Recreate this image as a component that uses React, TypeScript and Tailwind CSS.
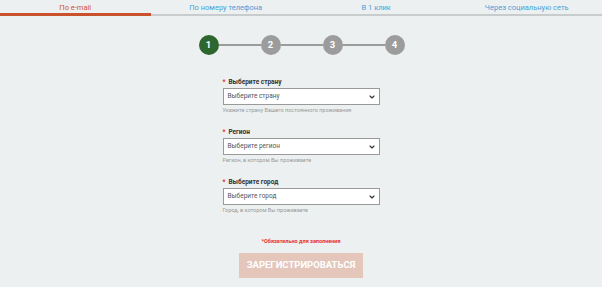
import { ChevronDown } from "lucide-react";

const tabs = [
  { label: "По e-mail", active: true },
  { label: "По номеру телефона", active: false },
  { label: "В 1 клик", active: false },
  { label: "Через социальную сеть", active: false },
];

const fields = [
  {
    label: "Выберите страну",
    placeholder: "Выберите страну",
    hint: "Укажите страну Вашего постоянного проживания",
  },
  {
    label: "Регион",
    placeholder: "Выберите регион",
    hint: "Регион, в котором Вы проживаете",
  },
  {
    label: "Выберите город",
    placeholder: "Выберите город",
    hint: "Город, в котором Вы проживаете",
  },
];

const Step = ({ n, active }: { n: number; active?: boolean }) => (
  <div
    className={`w-[20px] h-[20px] rounded-full flex items-center justify-center text-white text-[9.5px] font-bold ${
      active ? "bg-[#2e6630]" : "bg-[#9c9c9c]"
    }`}
  >
    {n}
  </div>
);

export default function App() {
  return (
    <div className="w-[602px] h-[287px] bg-[#edf0f0] overflow-hidden font-['Roboto',sans-serif]">
      <div className="grid grid-cols-4">
        {tabs.map((t) => (
          <div
            key={t.label}
            className={`h-[16px] flex items-start justify-center pt-[3px] text-[7.5px] leading-[9px] ${
              t.active
                ? "text-[#d0542f] border-b-[3px] border-[#c9522c]"
                : "text-[#4aa1d8] border-b-[2px] border-[#c9cccc]"
            }`}
          >
            {t.label}
          </div>
        ))}
      </div>

      <div className="flex items-center justify-center mt-[19px] pl-[1px]">
        {[1, 2, 3, 4].map((n) => (
          <div key={n} className="flex items-center">
            {n > 1 && <div className="w-[42px] h-[2.5px] bg-[#9c9c9c]" />}
            <Step n={n} active={n === 1} />
          </div>
        ))}
      </div>

      <div className="w-[157px] mx-auto mt-[22px] flex flex-col gap-[12px]">
        {fields.map((f) => (
          <div key={f.label} className="flex flex-col">
            <div className="text-[6.5px] leading-[10px] font-bold text-[#333]">
              <span className="text-[#e0302c] mr-[3px]">*</span>
              {f.label}
            </div>
            <div className="mt-[1px] h-[17px] bg-white border border-[#9a9a9a] flex items-center justify-between pl-[4px] pr-[3px]">
              <span className="text-[6.5px] text-[#555]">{f.placeholder}</span>
              <ChevronDown size={8} strokeWidth={3.5} className="text-[#333]" />
            </div>
            <div className="mt-[1px] text-[5.5px] leading-[9px] text-[#9a9a9a]">
              {f.hint}
            </div>
          </div>
        ))}
      </div>

      <div className="mt-[22px] text-center text-[5.5px] leading-[9px] font-bold text-[#e8302c]">
        *Обязательно для заполнения
      </div>

      <div className="flex justify-center mt-[7px]">
        <button className="w-[124px] h-[25px] bg-[#e4c6bb] text-white text-[9.5px] font-bold flex items-center justify-center">
          ЗАРЕГИСТРИРОВАТЬСЯ
        </button>
      </div>
    </div>
  );
}
